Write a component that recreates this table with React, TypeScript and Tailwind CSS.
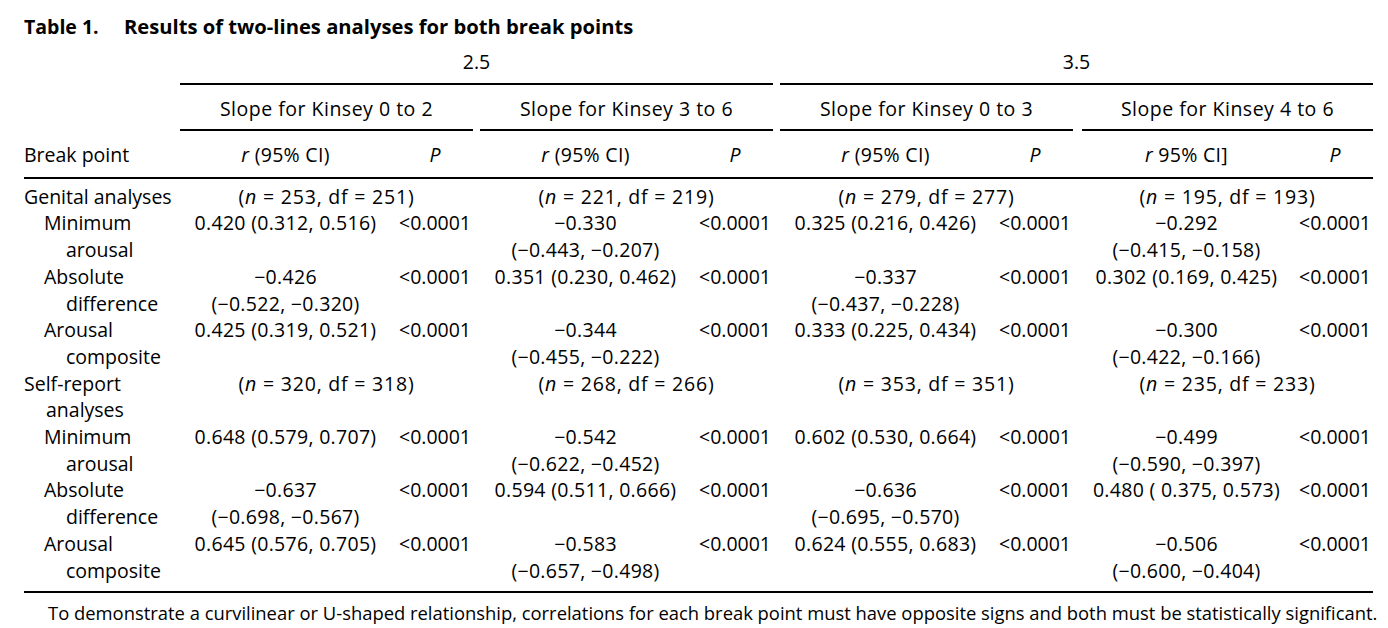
import React from 'react';

type Val = { r: string[]; p: string };
type DataRow = { kind: 'data'; label: [string, string]; vals: Val[] };
type SectionRow = { kind: 'section'; label: string[]; n: [string, string][] };
type Row = DataRow | SectionRow;

const P = '<0.0001';
const v = (...r: string[]): Val => ({ r, p: P });

const rows: Row[] = [
    {
        kind: 'section',
        label: ['Genital analyses'],
        n: [['253', '251'], ['221', '219'], ['279', '277'], ['195', '193']],
    },
    {
        kind: 'data',
        label: ['Minimum', 'arousal'],
        vals: [
            v('0.420 (0.312, 0.516)'),
            v('−0.330', '(−0.443, −0.207)'),
            v('0.325 (0.216, 0.426)'),
            v('−0.292', '(−0.415, −0.158)'),
        ],
    },
    {
        kind: 'data',
        label: ['Absolute', 'difference'],
        vals: [
            v('−0.426', '(−0.522, −0.320)'),
            v('0.351 (0.230, 0.462)'),
            v('−0.337', '(−0.437, −0.228)'),
            v('0.302 (0.169, 0.425)'),
        ],
    },
    {
        kind: 'data',
        label: ['Arousal', 'composite'],
        vals: [
            v('0.425 (0.319, 0.521)'),
            v('−0.344', '(−0.455, −0.222)'),
            v('0.333 (0.225, 0.434)'),
            v('−0.300', '(−0.422, −0.166)'),
        ],
    },
    {
        kind: 'section',
        label: ['Self-report', 'analyses'],
        n: [['320', '318'], ['268', '266'], ['353', '351'], ['235', '233']],
    },
    {
        kind: 'data',
        label: ['Minimum', 'arousal'],
        vals: [
            v('0.648 (0.579, 0.707)'),
            v('−0.542', '(−0.622, −0.452)'),
            v('0.602 (0.530, 0.664)'),
            v('−0.499', '(−0.590, −0.397)'),
        ],
    },
    {
        kind: 'data',
        label: ['Absolute', 'difference'],
        vals: [
            v('−0.637', '(−0.698, −0.567)'),
            v('0.594 (0.511, 0.666)'),
            v('−0.636', '(−0.695, −0.570)'),
            v('0.480 ( 0.375, 0.573)'),
        ],
    },
    {
        kind: 'data',
        label: ['Arousal', 'composite'],
        vals: [
            v('0.645 (0.576, 0.705)'),
            v('−0.583', '(−0.657, −0.498)'),
            v('0.624 (0.555, 0.683)'),
            v('−0.506', '(−0.600, −0.404)'),
        ],
    },
];

const slopes = ['Slope for Kinsey 0 to 2', 'Slope for Kinsey 3 to 6', 'Slope for Kinsey 0 to 3', 'Slope for Kinsey 4 to 6'];
const rHeads = ['(95% CI)', '(95% CI)', '(95% CI)', '95% CI]'];

function Spacer({ className = '' }: { className?: string }) {
    return <td className={className} />;
}

export default function App() {
    const last = rows.length - 1;

    return (
        <div className="w-[1388px] h-[628px] bg-white text-black font-['Open_Sans',sans-serif] text-[19.5px] leading-[26.7px] pl-6 pt-[12.5px] overflow-hidden">
            <div className="font-bold">
                <span className="inline-block w-[100px]">Table 1.</span>
                <span className="text-[20.2px]">Results of two-lines analyses for both break points</span>
            </div>

            <table className="table-fixed border-separate border-spacing-0 w-[1349px] mt-[9px]">
                <colgroup>
                    <col className="w-[156px]" />
                    <col className="w-[217px]" />
                    <col className="w-[76px]" />
                    <col className="w-[7px]" />
                    <col className="w-[217px]" />
                    <col className="w-[76px]" />
                    <col className="w-[7px]" />
                    <col className="w-[217px]" />
                    <col className="w-[76px]" />
                    <col className="w-[9px]" />
                    <col className="w-[215px]" />
                    <col className="w-[76px]" />
                </colgroup>
                <thead>
                    {/* break point values */}
                    <tr>
                        <th />
                        <th colSpan={5} className="font-normal text-center pb-[6.65px] border-b-2 border-black">2.5</th>
                        <Spacer />
                        <th colSpan={5} className="font-normal text-center pb-[6.65px] border-b-2 border-black">3.5</th>
                    </tr>
                    <tr>
                        <th />
                        {slopes.map((s, i) => (
                            <React.Fragment key={s}>
                                {i > 0 && <Spacer />}
                                <th colSpan={2} className="font-normal text-center tracking-[0.5px] pt-[11.65px] pb-[5.65px] border-b-2 border-black">
                                    {s}
                                </th>
                            </React.Fragment>
                        ))}
                    </tr>
                    <tr>
                        <th className="font-normal text-left pt-[11.65px] pb-[7.65px] border-b-2 border-black">Break point</th>
                        {rHeads.map((h, i) => (
                            <React.Fragment key={i}>
                                {i > 0 && <Spacer className="border-b-2 border-black" />}
                                <th className="font-normal text-center tracking-[0.3px] pr-[6px] pt-[11.65px] pb-[7.65px] border-b-2 border-black">
                                    <i>r</i> {h}
                                </th>
                                <th className="font-normal text-center pt-[11.65px] pb-[7.65px] border-b-2 border-black">
                                    <i>P</i>
                                </th>
                            </React.Fragment>
                        ))}
                    </tr>
                </thead>
                <tbody>
                    {rows.map((row, ri) => {
                        const pad = ri === 0 ? 'pt-[5.2px]' : ri === last ? 'pb-[6.85px] border-b-2 border-black' : '';
                        if (row.kind === 'section') {
                            return (
                                <tr key={ri} className="align-top">
                                    <td className={`text-left ${pad}`}>
                                        {row.label.map((l, li) => (
                                            <div key={l} className={li > 0 ? 'pl-[22px]' : ''}>{l}</div>
                                        ))}
                                    </td>
                                    {row.n.map(([n, df], i) => (
                                        <React.Fragment key={i}>
                                            {i > 0 && <Spacer className={pad} />}
                                            <td colSpan={2} className={`text-center tracking-[0.8px] ${pad}`}>
                                                (<i>n</i> = {n}, df = {df})
                                            </td>
                                        </React.Fragment>
                                    ))}
                                </tr>
                            );
                        }
                        return (
                            <tr key={ri} className="align-top">
                                <td className={`text-left ${pad}`}>
                                    <div className="pl-[20px]">{row.label[0]}</div>
                                    <div className="pl-[42px]">{row.label[1]}</div>
                                </td>
                                {row.vals.map((val, i) => (
                                    <React.Fragment key={i}>
                                        {i > 0 && <Spacer className={pad} />}
                                        <td className={`text-center tracking-[0.3px] pr-[6px] whitespace-pre ${pad}`}>
                                            {val.r.map((line) => (
                                                <div key={line}>{line}</div>
                                            ))}
                                        </td>
                                        <td className={`text-center ${pad}`}>{val.p}</td>
                                    </React.Fragment>
                                ))}
                            </tr>
                        );
                    })}
                </tbody>
            </table>

            <p className="w-[1349px] pl-6 pt-[7px] text-[18.4px] whitespace-nowrap">
                To demonstrate a curvilinear or U-shaped relationship, correlations for each break point must have opposite signs and both must be statistically significant.
            </p>
        </div>
    );
}
